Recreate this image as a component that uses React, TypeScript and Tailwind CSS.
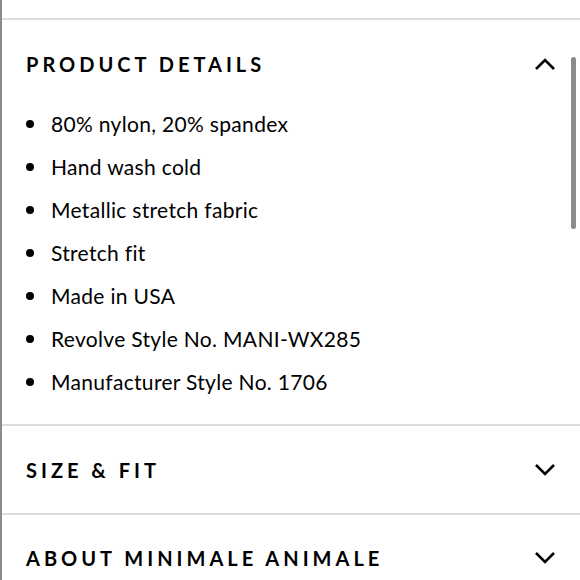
const details = [
  '80% nylon, 20% spandex',
  'Hand wash cold',
  'Metallic stretch fabric',
  'Stretch fit',
  'Made in USA',
  'Revolve Style No. MANI-WX285',
  'Manufacturer Style No. 1706',
];

function Chevron({ up }: { up?: boolean }) {
  return (
    <svg width="22" height="14" viewBox="0 0 22 14" fill="none" className="block">
      {up ? (
        <path d="M2 12 L11 3 L20 12" stroke="#000" strokeWidth="2.6" />
      ) : (
        <path d="M2 2 L11 11 L20 2" stroke="#000" strokeWidth="2.6" />
      )}
    </svg>
  );
}

export default function App() {
  return (
    <div
      className="relative w-[580px] h-[580px] overflow-hidden bg-white border-l-2 border-[#8a8a8a] text-black"
      style={{ fontFamily: 'Lato, "Noto Sans", sans-serif' }}
    >
      <div className="h-[18px]" />
      <div className="border-t-2 border-[#dcdcdc]">
        <div className="flex items-center justify-between pl-[24px] pr-[24px] pt-[32px] pb-[15px]">
          <h2 className="text-[20px] font-bold tracking-[0.2em] leading-[24px]">PRODUCT DETAILS</h2>
          <Chevron up />
        </div>
        <ul className="pl-[24px] pt-[11px] pb-[21px]">
          {details.map((d) => (
            <li key={d} className="flex items-center h-[43px] text-[21px] tracking-[0.015em]">
              <span className="w-[8px] h-[8px] rounded-full bg-black mr-[17px]" />
              <span>{d}</span>
            </li>
          ))}
        </ul>
      </div>
      <div className="absolute right-[4px] top-[57px] w-[5px] h-[172px] rounded-full bg-[#8c8c8c]" />
      <div className="border-t-2 border-[#dcdcdc] flex items-center justify-between pl-[24px] pr-[24px] h-[89px]">
        <h2 className="text-[20px] font-bold tracking-[0.2em] leading-[24px]">SIZE &amp; FIT</h2>
        <Chevron />
      </div>
      <div className="border-t-2 border-[#dcdcdc] flex items-center justify-between pl-[24px] pr-[24px] h-[88px]">
        <h2 className="text-[20px] font-bold tracking-[0.2em] leading-[24px]">ABOUT MINIMALE ANIMALE</h2>
        <Chevron />
      </div>
    </div>
  );
}
